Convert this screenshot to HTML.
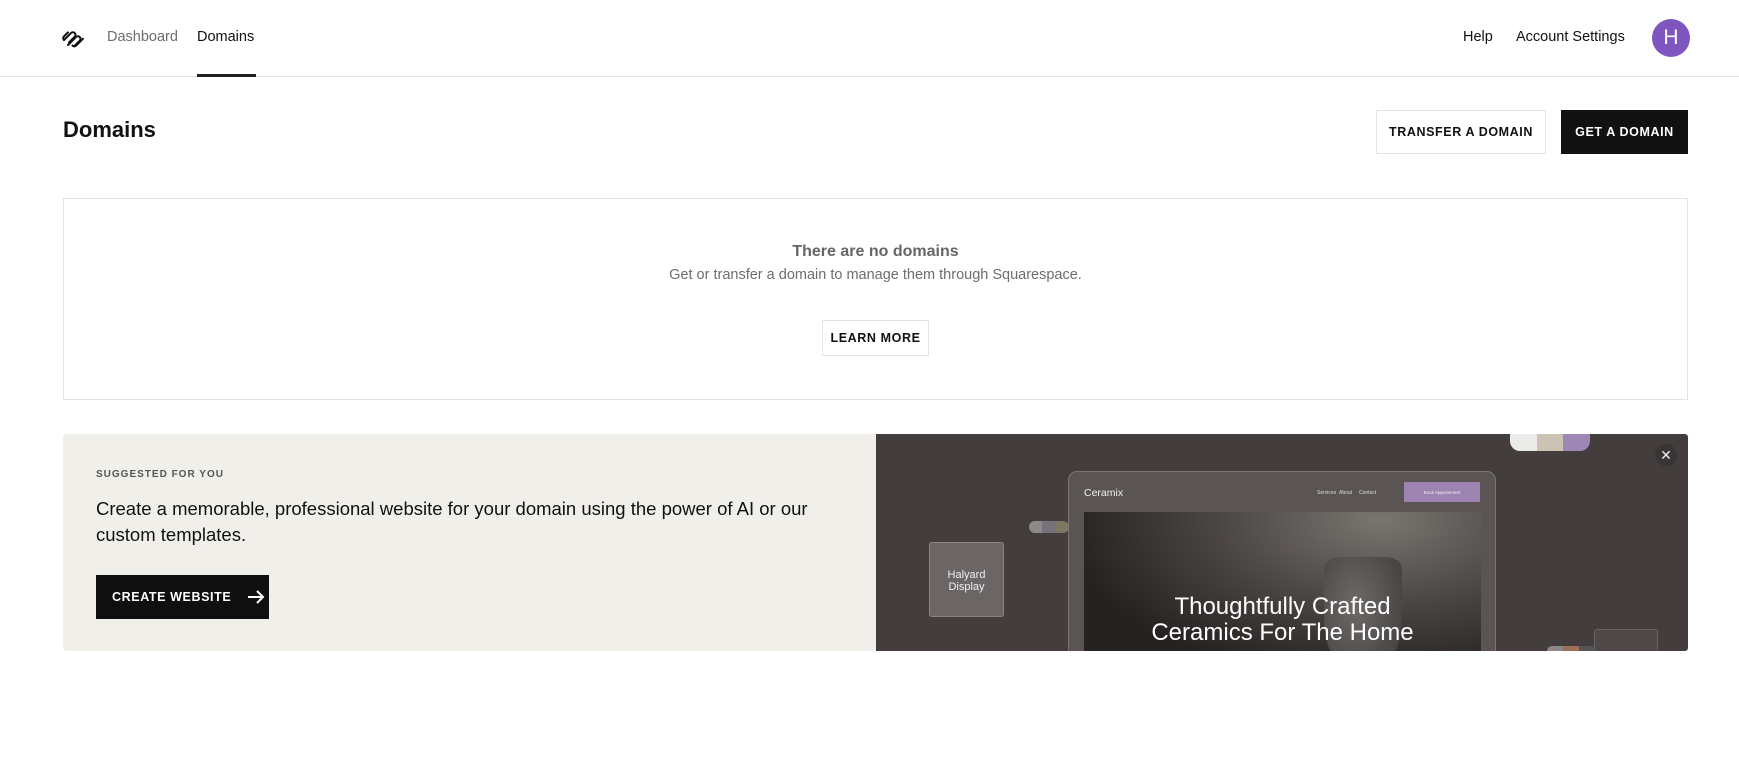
<!DOCTYPE html>
<html><head><meta charset="utf-8"><style>
*{margin:0;padding:0;box-sizing:border-box}
body{width:1739px;height:773px;background:#fff;font-family:"Liberation Sans",Arial,sans-serif;color:#111;position:relative;overflow:hidden}
.a{position:absolute}
.btn{position:absolute;display:flex;align-items:center;justify-content:center;font-size:12.5px;font-weight:700;letter-spacing:.6px}
</style></head><body>
<div class="a" style="left:0;top:76px;width:1739px;height:1px;background:#e3e3e3"></div>
<svg class="a" style="left:62px;top:28px" width="24" height="22" viewBox="0 0 24 22" fill="none" stroke="#111" stroke-width="2" stroke-linecap="round">
<path d="M2 12 L9 5 a2.6 2.6 0 0 1 3.7 3.7 L7 14.4"/><path d="M6 17 L14 9 a2.6 2.6 0 0 1 3.7 3.7 L12 18.4"/><path d="M10.5 17.5 a2.6 2.6 0 0 0 3.7 0 L21 10.7"/><path d="M2 12 a2.6 2.6 0 0 1 0-3.7 L6 4.4"/></svg>
<div class="a" style="left:107px;top:29px;font-size:14.5px;color:#6d6d6d">Dashboard</div>
<div class="a" style="left:197px;top:29px;font-size:14.5px;color:#111">Domains</div>
<div class="a" style="left:197px;top:74px;width:59px;height:3px;background:#222"></div>
<div class="a" style="left:1463px;top:29px;font-size:14.5px">Help</div>
<div class="a" style="left:1516px;top:29px;font-size:14.5px">Account Settings</div>
<div class="a" style="left:1652px;top:19px;width:38px;height:38px;border-radius:50%;background:#7f56bf;color:#fff;font-size:21px;display:flex;align-items:center;justify-content:center">H</div>
<div class="a" style="left:63px;top:117px;font-size:22px;font-weight:700">Domains</div>
<div class="btn" style="left:1376px;top:110px;width:170px;height:44px;border:1px solid #e3e3e3">TRANSFER A DOMAIN</div>
<div class="btn" style="left:1561px;top:110px;width:127px;height:44px;background:#111;color:#fff">GET A DOMAIN</div>
<div class="a" style="left:63px;top:198px;width:1625px;height:202px;border:1px solid #e3e3e3"></div>
<div class="a" style="left:63px;top:243px;width:1625px;text-align:center;font-size:16px;font-weight:700;color:#666">There are no domains</div>
<div class="a" style="left:63px;top:267px;width:1625px;text-align:center;font-size:14.5px;color:#6d6d6d">Get or transfer a domain to manage them through Squarespace.</div>
<div class="btn" style="left:822px;top:320px;width:107px;height:36px;border:1px solid #e3e3e3">LEARN MORE</div>
<div class="a" style="left:63px;top:434px;width:1625px;height:217px;border-radius:3px;overflow:hidden;background:#f1efea">
 <div class="a" style="left:33px;top:35px;font-size:10px;letter-spacing:1px;color:#555;font-weight:700">SUGGESTED FOR YOU</div>
 <div class="a" style="left:33px;top:62px;font-size:18.5px;line-height:26px;width:760px">Create a memorable, professional website for your domain using the power of AI or our custom templates.</div>
 <div class="btn" style="left:33px;top:141px;width:173px;height:44px;background:#0f0f0f;color:#fff;justify-content:flex-start;padding-left:16px">CREATE WEBSITE<svg style="margin-left:16px" width="18" height="14" viewBox="0 0 18 14" fill="none" stroke="#fff" stroke-width="2"><path d="M1 7h15M10 1l6 6-6 6"/></svg></div>
 <div class="a" style="left:813px;top:0;width:812px;height:217px;background:#433e3d">
  <div class="a" style="left:634px;top:-8px;width:80px;height:25px;border-radius:10px;overflow:hidden;display:flex"><div style="flex:1;background:#ebebea"></div><div style="flex:1;background:#cdc3b2"></div><div style="flex:1;background:#9e86b5"></div></div>
  <div class="a" style="left:779px;top:10px;width:22px;height:22px;border-radius:50%;background:#3a3534;color:#eee;font-size:14px;display:flex;align-items:center;justify-content:center">✕</div>
  <div class="a" style="left:153px;top:87px;width:40px;height:12px;border-radius:6px;overflow:hidden;display:flex"><div style="flex:1;background:#8d8b8a"></div><div style="flex:1;background:#77727a"></div><div style="flex:1;background:#7b7760"></div></div>
  <div class="a" style="left:53px;top:108px;width:75px;height:75px;border:1px solid #8a8584;border-radius:3px;background:#6b6665;color:#eee;font-size:11px;text-align:center;padding-top:26px;line-height:12px">Halyard<br>Display</div>
  <div class="a" style="left:192px;top:37px;width:428px;height:200px;border:1px solid #7a7473;border-radius:9px;background:#5a5453">
   <div class="a" style="left:15px;top:15px;color:#f2f2f2;font-size:10.5px">Ceramix</div>
   <div class="a" style="left:248px;top:18px;color:#ddd;font-size:5px">Services</div>
   <div class="a" style="left:270px;top:18px;color:#ddd;font-size:5px">About</div>
   <div class="a" style="left:290px;top:18px;color:#ddd;font-size:5px">Contact</div>
   <div class="a" style="left:335px;top:10px;width:76px;height:20px;background:#9c83b0;color:#f3eef7;font-size:4.5px;display:flex;align-items:center;justify-content:center">Book Appointment</div>
   <div class="a" style="left:15px;top:40px;width:397px;height:160px;background:radial-gradient(ellipse at 75% 5%,#7a7570 0%,#4a4543 40%,#262221 75%)">
    <div class="a" style="left:240px;top:45px;width:78px;height:120px;background:radial-gradient(ellipse at 40% 40%,#6d6a68,#3b3938);border-radius:16px 16px 35px 35px/12px 12px 60px 60px"></div>
    <div class="a" style="left:0;top:82px;width:397px;text-align:center;color:#fff;font-size:24px;line-height:26px">Thoughtfully Crafted<br>Ceramics For The Home</div>
   </div>
  </div>
  <div class="a" style="left:718px;top:195px;width:64px;height:30px;border:1px solid #6a6463;border-radius:3px;background:#4e4948"></div>
  <div class="a" style="left:671px;top:212px;width:48px;height:10px;border-radius:5px;overflow:hidden;display:flex"><div style="flex:1;background:#8b8886"></div><div style="flex:1;background:#a06f5c"></div><div style="flex:1;background:#555"></div></div>
 </div>
</div>
</body></html>
